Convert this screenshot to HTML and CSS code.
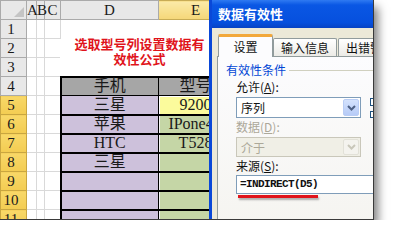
FILE: index.html
```html
<!DOCTYPE html>
<html lang="zh-CN">
  <head>
    <meta charset="UTF-8" />
    <title>数据有效性</title>
    <link rel="stylesheet" href="styles.css">
  </head>
  <body>
    <div class="shot">
      <table class="sheet">
        <colgroup>
          <col class="c-rh" /><col class="c-a" /><col class="c-b" /><col class="c-c" />
          <col class="c-d" /><col class="c-e" /><col class="c-f" />
        </colgroup>
        <tr class="col-heads">
          <th class="corner"><span class="corner-tri"></span></th>
          <th>A</th><th>B</th><th>C</th><th>D</th><th class="sel">E</th><th>F</th>
        </tr>
        <tr>
          <th class="rh">1</th><td></td><td></td><td></td>
          <td class="title" colspan="2" rowspan="3">选取型号列设置数据有<br />效性公式</td>
          <td></td>
        </tr>
        <tr>
          <th class="rh">2</th><td></td><td></td><td></td><td></td>
        </tr>
        <tr>
          <th class="rh">3</th><td></td><td></td><td></td><td></td>
        </tr>
        <tr>
          <th class="rh">4</th><td></td><td></td><td></td>
          <td class="hd brand-hd">手机</td><td class="hd">型号</td><td></td>
        </tr>
        <tr>
          <th class="rh sel">5</th><td></td><td></td><td></td>
          <td class="brand">三星</td><td class="model active">9200</td><td></td>
        </tr>
        <tr>
          <th class="rh sel">6</th><td></td><td></td><td></td>
          <td class="brand">苹果</td><td class="model">IPone4S</td><td></td>
        </tr>
        <tr>
          <th class="rh sel">7</th><td></td><td></td><td></td>
          <td class="brand">HTC</td><td class="model">T528</td><td></td>
        </tr>
        <tr>
          <th class="rh sel">8</th><td></td><td></td><td></td>
          <td class="brand">三星</td><td class="model"></td><td></td>
        </tr>
        <tr>
          <th class="rh sel">9</th><td></td><td></td><td></td>
          <td class="brand"></td><td class="model"></td><td></td>
        </tr>
        <tr>
          <th class="rh sel">10</th><td></td><td></td><td></td>
          <td class="brand"></td><td class="model"></td><td></td>
        </tr>
        <tr>
          <th class="rh sel">11</th><td></td><td></td><td></td>
          <td class="brand"></td><td class="model"></td><td></td>
        </tr>
      </table>

      <div class="dialog">
        <div class="dlg-title">数据有效性</div>
        <div class="dlg-body">
          <div class="tabs">
            <div class="tab active">设置</div>
            <div class="tab">输入信息</div>
            <div class="tab">出错警告</div>
          </div>
          <div class="panel">
            <div class="group-title">有效性条件</div>
            <div class="allow-block">
              <div class="fields">
                <div class="field-label">允许(<u>A</u>):</div>
                <div class="combo">
                  <span class="combo-text">序列</span>
                  <span class="drop">
                    <svg width="9" height="6" viewBox="0 0 9 6"><path d="M1 1 L4.5 4.5 L8 1" fill="none" stroke="#4d6185" stroke-width="2"/></svg>
                  </span>
                </div>
              </div>
              <div class="checks">
                <span class="check"></span>
                <span class="check"></span>
              </div>
            </div>
            <div class="field-label disabled">数据(<u>D</u>):</div>
            <div class="combo combo-off">
              <span class="combo-text">介于</span>
              <span class="drop">
                <svg width="9" height="6" viewBox="0 0 9 6"><path d="M1 1 L4.5 4.5 L8 1" fill="none" stroke="#c9c7ba" stroke-width="2"/></svg>
              </span>
            </div>
            <div class="field-label">来源(<u>S</u>):</div>
            <div class="source">=INDIRECT(D5)</div>
            <div class="mark"></div>
          </div>
        </div>
      </div>
    </div>
  </body>
</html>
```

FILE: styles.css
```css
* {
  margin: 0;
  padding: 0;
  box-sizing: border-box;
}

:root {
  --head-bg: #e8e8e8;
  --head-line: #aaaaaa;
  --grid-line: #d9d9d9;
  --sel-row: #f3cc52;
  --brand-bg: #cdc1db;
  --model-bg: #c5d6a6;
  --red: #e0141b;
  --xp-blue: #0a48d8;
  --xp-face: #ece9d8;
  --xp-line: #919b9c;
  --field-line: #7f9db9;
}

body {
  background-color: #ffffff;
  font-family: "Liberation Serif", "Noto Sans CJK SC", serif;
}

.shot {
  position: relative;
  width: 374px;
  height: 220px;
  overflow: hidden;
  background-color: #ffffff;
  border-right: 1px solid #3a3a3a;
  border-bottom: 1px solid #3a3a3a;
  box-shadow: 4px 7px 9px rgba(0, 0, 0, 0.5);
}

/* spreadsheet */

.sheet {
  border-collapse: collapse;
  table-layout: fixed;
  width: 292px;
}

.c-rh { width: 26px; }
.c-a { width: 10px; }
.c-b { width: 8px; }
.c-c { width: 16px; }
.c-d { width: 98px; }
.c-e { width: 74px; }
.c-f { width: 60px; }

.sheet tr {
  height: 19px;
}

.sheet td,
.sheet th {
  border: 1px solid var(--grid-line);
  font-size: 15px;
  line-height: 16px;
  font-weight: normal;
  color: #1a1a1a;
  text-align: center;
  white-space: nowrap;
  overflow: visible;
}

.sheet .col-heads th {
  background-color: var(--head-bg);
  border-color: var(--head-line);
}

.sheet .col-heads th.sel {
  background: linear-gradient(#fbeaa8, #f5d778);
  border-color: #c8ac55;
}

.corner {
  vertical-align: bottom;
}

.corner-tri {
  display: block;
  width: 0;
  height: 0;
  margin: 0 2px 2px auto;
  border-left: 10px solid transparent;
  border-bottom: 10px solid #c4c4c4;
}

.sheet .rh {
  background-color: var(--head-bg);
  border-color: var(--head-line);
  padding-right: 5px;
}

.sheet .rh.sel {
  background: linear-gradient(#f8d868, var(--sel-row));
  border-color: #c9a640;
}

.sheet .title {
  vertical-align: top;
  padding: 17px 14px 0 0;
  font-size: 13px;
  line-height: 15px;
  font-weight: bold;
  color: var(--red);
  background-color: #ffffff;
  border-color: #ffffff;
}

.sheet .hd {
  background-color: #a6a6a6;
  border: 1px solid #000000;
  border-top: 2px solid #000000;
  font-size: 16px;
}

.sheet .brand-hd,
.sheet .brand {
  border-left: 2px solid #000000;
}

.sheet .brand,
.sheet .model {
  border-top: 1px solid #000000;
  border-bottom: 2px solid #000000;
  font-size: 16px;
}

.sheet .brand {
  background-color: var(--brand-bg);
  border-right: 1px solid #000000;
}

.sheet .model {
  background-color: var(--model-bg);
  box-shadow: inset 1px 0 #f4f4f4;
}

.sheet .model.active {
  background-color: #fbfb9c;
  box-shadow: inset 1px 1px #ffffff;
}

/* dialog window */

.dialog {
  position: absolute;
  top: 0;
  left: 209px;
  width: 200px;
  height: 240px;
  background-color: var(--xp-face);
  border-left: 3px solid var(--xp-blue);
  font-family: "Noto Sans CJK SC", sans-serif;
  font-size: 12px;
  color: #111111;
}

.dlg-title {
  height: 28px;
  padding-left: 6px;
  background: linear-gradient(#2f7af2, #0a57e4 18%, #0650de 80%, #0743c4);
  color: #ffffff;
  font-size: 13px;
  font-weight: bold;
  line-height: 28px;
}

.dlg-body {
  padding: 5px 0 0 5px;
}

.tabs {
  display: flex;
  align-items: flex-end;
  height: 23px;
  padding-left: 1px;
}

.tab {
  width: 64px;
  height: 18px;
  margin-right: 1px;
  border: 1px solid var(--xp-line);
  border-bottom: none;
  border-radius: 2px 2px 0 0;
  background: linear-gradient(#ffffff, #ecebe6);
  line-height: 17px;
  text-align: center;
  white-space: nowrap;
  overflow: hidden;
}

.tab.active {
  position: relative;
  z-index: 1;
  width: 55px;
  height: 23px;
  margin-right: 0;
  margin-bottom: -1px;
  border-top: 3px solid #f2a83b;
  background: #fcfcfe;
  line-height: 20px;
}

.panel {
  height: 200px;
  padding: 6px 0 0 8px;
  border: 1px solid var(--xp-line);
  background: linear-gradient(#fcfcfe, #f4f3ee);
}

.group-title {
  display: flex;
  align-items: center;
  height: 14px;
  color: #0046d5;
  line-height: 14px;
}

.group-title::after {
  content: "";
  flex: 1;
  height: 1px;
  margin-left: 3px;
  background-color: #d0d0bf;
}

.allow-block {
  display: flex;
  gap: 9px;
  height: 38px;
  margin-top: 3px;
}

.fields {
  margin-left: 10px;
}

.field-label {
  height: 14px;
  line-height: 14px;
  margin-left: 10px;
}

.fields .field-label {
  margin-left: 0;
}

.field-label.disabled {
  margin-top: 2px;
  color: #aca899;
}

.field-label u {
  text-underline-offset: 1px;
}

.combo {
  display: flex;
  align-items: center;
  justify-content: space-between;
  width: 125px;
  height: 21px;
  margin-top: 3px;
  padding: 1px;
  border: 1px solid var(--field-line);
  background-color: #ffffff;
}

.combo-text {
  padding-left: 3px;
  line-height: 17px;
}

.drop {
  display: flex;
  align-items: center;
  justify-content: center;
  width: 16px;
  height: 100%;
  border: 1px solid #b9cdf5;
  border-radius: 2px;
  background: linear-gradient(#d4e2fd, #b6cbf7);
}

.combo-off {
  height: 20px;
  margin-left: 10px;
  border-color: #c9c7ba;
  background-color: #f0efe6;
  color: #aca899;
}

.combo-off .drop {
  border-color: #e2e1d8;
  background: #f4f3ee;
}

.checks {
  display: flex;
  flex-direction: column;
  gap: 5px;
  padding-top: 18px;
}

.check {
  display: block;
  width: 13px;
  height: 13px;
  border: 1px solid #1c5180;
  background-color: #ffffff;
}

.field-label + .source,
.combo-off + .field-label {
  margin-top: 2px;
}

.source {
  width: 150px;
  height: 19px;
  margin: 1px 0 0 10px;
  padding-left: 3px;
  border: 1px solid var(--field-line);
  background-color: #ffffff;
  font-family: "Liberation Mono", monospace;
  font-size: 11px;
  font-weight: bold;
  letter-spacing: -0.6px;
  line-height: 17px;
}

.mark {
  width: 80px;
  height: 3px;
  margin: 1px 0 0 12px;
  background-color: var(--red);
  box-shadow: 1px 2px 2px rgba(0, 0, 0, 0.3);
}
```
